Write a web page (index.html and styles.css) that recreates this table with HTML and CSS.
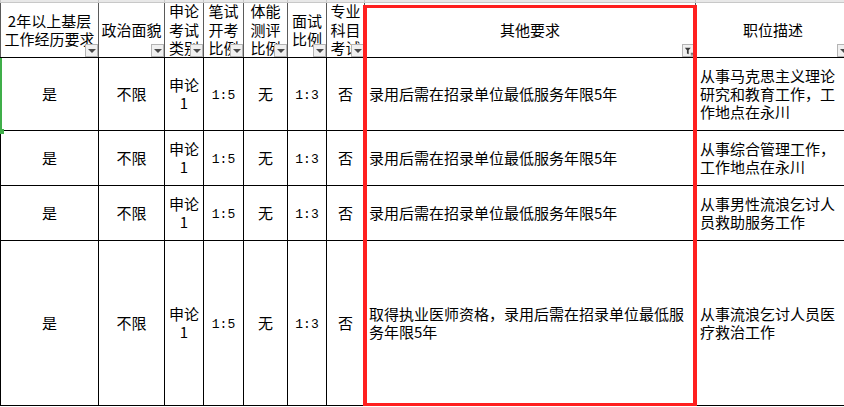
FILE: index.html
```html
<!DOCTYPE html>
<html lang="zh">
<head>
<meta charset="utf-8">
<link rel="stylesheet" href="styles.css">
</head>
<body>
<div class="sheet">
  <table class="grid">
    <colgroup>
      <col class="c1"><col class="c2"><col class="c3"><col class="c4"><col class="c5"><col class="c6"><col class="c7"><col class="c8"><col class="c9">
    </colgroup>
    <tr class="strip"><td></td><td></td><td></td><td></td><td></td><td></td><td></td><td></td><td></td></tr>
    <tr class="head">
      <th><div class="hc">2年以上基层<br>工作经历要求</div><span class="fb"></span></th>
      <th><div class="hc">政治面貌</div><span class="fb"></span></th>
      <th><div class="hc">申论<br>考试<br>类别</div><span class="fb"></span></th>
      <th><div class="hc">笔试<br>开考<br>比例</div><span class="fb"></span></th>
      <th><div class="hc">体能<br>测评<br>比例</div><span class="fb"></span></th>
      <th><div class="hc">面试<br>比例</div><span class="fb"></span></th>
      <th><div class="hc">专业<br>科目<br>考试</div><span class="fb"></span></th>
      <th><div class="hc">其他要求</div><span class="fb filt"><svg viewBox="0 0 12 12" width="12" height="12"><path d="M2 2.5h6.5L6.2 5.3V9.5L4.3 8.6V5.3Z" fill="#3a3a3a"/><rect x="8.5" y="8" width="2.5" height="0.9" fill="#3a3a3a"/><rect x="8.5" y="9.8" width="2.5" height="0.9" fill="#3a3a3a"/></svg></span></th>
      <th><div class="hc">职位描述</div><span class="fb"></span></th>
    </tr>
    <tr class="r1">
      <td class="ctr">是</td><td class="ctr">不限</td><td class="ctr">申论<br>1</td><td class="ctr"><span class="num">1:5</span></td><td class="ctr">无</td><td class="ctr"><span class="num">1:3</span></td><td class="ctr">否</td>
      <td class="lft">录用后需在招录单位最低服务年限5年</td>
      <td class="lft">从事马克思主义理论<br>研究和教育工作，工<br>作地点在永川</td>
    </tr>
    <tr class="r2">
      <td class="ctr">是</td><td class="ctr">不限</td><td class="ctr">申论<br>1</td><td class="ctr"><span class="num">1:5</span></td><td class="ctr">无</td><td class="ctr"><span class="num">1:3</span></td><td class="ctr">否</td>
      <td class="lft">录用后需在招录单位最低服务年限5年</td>
      <td class="lft">从事综合管理工作，<br>工作地点在永川</td>
    </tr>
    <tr class="r3">
      <td class="ctr">是</td><td class="ctr">不限</td><td class="ctr">申论<br>1</td><td class="ctr"><span class="num">1:5</span></td><td class="ctr">无</td><td class="ctr"><span class="num">1:3</span></td><td class="ctr">否</td>
      <td class="lft">录用后需在招录单位最低服务年限5年</td>
      <td class="lft">从事男性流浪乞讨人<br>员救助服务工作</td>
    </tr>
    <tr class="r4">
      <td class="ctr">是</td><td class="ctr">不限</td><td class="ctr">申论<br>1</td><td class="ctr"><span class="num">1:5</span></td><td class="ctr">无</td><td class="ctr"><span class="num">1:3</span></td><td class="ctr">否</td>
      <td class="lft">取得执业医师资格，录用后需在招录单位最低服<br>务年限5年</td>
      <td class="lft">从事流浪乞讨人员医<br>疗救治工作</td>
    </tr>
  </table>
  <div class="sel"><span class="handle"></span></div>
  <div class="mark"></div>
</div>
</body>
</html>
```

FILE: styles.css
```css
html, body {
  margin: 0;
  padding: 0;
  overflow: hidden;
  background: #fff;
}
.sheet {
  position: relative;
  width: 844px;
  height: 407px;
  overflow: hidden;
  font-family: "Noto Sans CJK SC", sans-serif;
  font-size: 15px;
  line-height: 18px;
  color: #000;
}
.grid {
  border-collapse: collapse;
  table-layout: fixed;
  width: 850px;
}
.c1 { width: 98px; }
.c2 { width: 66px; }
.c3 { width: 39px; }
.c4 { width: 40px; }
.c5 { width: 44px; }
.c6 { width: 39px; }
.c7 { width: 38px; }
.c8 { width: 331px; }
.c9 { width: 155px; }

.grid td, .grid th {
  padding: 0;
  border: 1px solid #000;
  font-weight: normal;
  vertical-align: middle;
}
.strip td {
  height: 2px;
  background: #e8e8e8;
  border: 1px solid #c8c8c8;
  border-top: none;
}
.head th {
  position: relative;
  height: 54px;
  border-top: 1px solid #c8c8c8;
  border-left-color: #5a5a5a;
  border-right-color: #5a5a5a;
  text-align: center;
}
.hc {
  height: 54px;
  overflow: hidden;
  display: flex;
  align-items: center;
  justify-content: center;
  white-space: nowrap;
  line-height: 18.5px;
}
.fb {
  position: absolute;
  right: 0;
  bottom: 0;
  width: 11px;
  height: 11px;
  background: #f0f0f0;
  border: 1px solid #b4b4b4;
  display: flex;
  align-items: center;
  justify-content: center;
}
.fb::after {
  content: "";
  border-left: 4px solid transparent;
  border-right: 4px solid transparent;
  border-top: 4px solid #4a4a4a;
  margin-top: 1px;
}
.fb.filt::after { display: none; }
.fb svg { display: block; }

.r1 td { height: 72px; }
.r2 td, .r3 td { height: 54px; }
.r4 td { height: 164px; }

.ctr { text-align: center; }
.lft { text-align: left; padding-left: 4px !important; white-space: nowrap; }
.num {
  font-family: "Liberation Mono", monospace;
  font-size: 13px;
}

.sel {
  position: absolute;
  left: 0;
  top: 58px;
  width: 2px;
  height: 73px;
  background: #3fae49;
}
.handle {
  position: absolute;
  left: 0;
  bottom: -3px;
  width: 4px;
  height: 5px;
  background: #3fae49;
}
.mark {
  position: absolute;
  left: 363px;
  top: 5px;
  width: 326px;
  height: 395px;
  border-style: solid;
  border-color: #ff1f1f;
  border-width: 3px 4px;
}
```
